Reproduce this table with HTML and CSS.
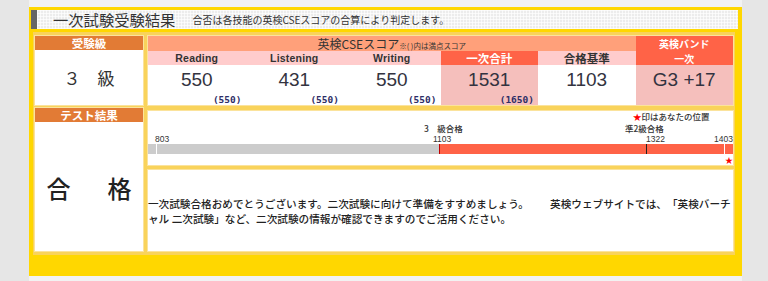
FILE: index.html
```html
<!DOCTYPE html>
<html lang="ja">
<head>
<meta charset="utf-8">
<title>一次試験受験結果</title>
<link rel="stylesheet" href="styles.css">
</head>
<body>
<div class="page">
  <div class="frame">
    <div class="head">
      <h1 class="head-title">一次試験受験結果</h1>
      <p class="head-note">合否は各技能の英検CSEスコアの合算により判定します。</p>
    </div>
    <div class="panel">
      <div class="row row-top">
        <div class="side">
          <div class="side-label">受験級</div>
          <div class="side-value grade">３　級</div>
        </div>
        <div class="scores">
          <div class="cse-head">英検CSEスコア<small>※( )内は満点スコア</small></div>
          <div class="band-head"><span>英検バンド</span><span>一次</span></div>
          <div class="sub sub-latin">Reading</div>
          <div class="sub sub-latin">Listening</div>
          <div class="sub sub-latin">Writing</div>
          <div class="sub sub-total">一次合計</div>
          <div class="sub">合格基準</div>
          <div class="val"><span class="num">550</span><span class="max">(550)</span></div>
          <div class="val"><span class="num">431</span><span class="max">(550)</span></div>
          <div class="val"><span class="num">550</span><span class="max">(550)</span></div>
          <div class="val val-pink"><span class="num">1531</span><span class="max">(1650)</span></div>
          <div class="val"><span class="num">1103</span></div>
          <div class="val val-pink"><span class="num">G3 +17</span></div>
        </div>
      </div>
      <div class="row row-bottom">
        <div class="side">
          <div class="side-label">テスト結果</div>
          <div class="side-value result"><span>合</span><span>格</span></div>
        </div>
        <div class="detail">
          <div class="chart">
            <div class="legend"><span class="star">★</span>印はあなたの位置</div>
            <div class="grade-label grade-3">3　級合格</div>
            <div class="grade-label grade-p2">準2級合格</div>
            <div class="tick-label tl-803">803</div>
            <div class="tick-label tl-1103">1103</div>
            <div class="tick-label tl-1322">1322</div>
            <div class="tick-label tl-1403">1403</div>
            <div class="bar">
              <div class="bar-base"></div>
              <div class="bar-pass"></div>
              <i class="tick tick-803"></i>
              <i class="tick tick-1103"></i>
              <i class="tick tick-1322"></i>
              <i class="tick tick-1403"></i>
            </div>
            <div class="you star">★</div>
          </div>
          <div class="message">
            <p>一次試験合格おめでとうございます。二次試験に向けて準備をすすめましょう。　　英検ウェブサイトでは、「英検バーチ<br>ャル 二次試験」など、二次試験の情報が確認できますのでご活用ください。</p>
          </div>
        </div>
      </div>
    </div>
  </div>
</div>
</body>
</html>
```

FILE: styles.css
```css
* { box-sizing: border-box; margin: 0; padding: 0; }
html, body { height: 100%; }
body {
  background: #e6e6e6;
  font-family: "Noto Sans CJK JP", "Liberation Sans", sans-serif;
  color: #333;
  text-spacing-trim: space-all;
}
.page {
  margin-left: 29px;
  width: 713px;
  min-height: 281px;
  background: #f2f2f2;
  padding-top: 7px;
}
.frame {
  background: #ffd700;
  padding: 3px 4px 21px 2px;
}
.head {
  height: 19px;
  display: flex;
  align-items: center;
  gap: 17px;
  border-left: 6px solid #666;
  background-color: #ececec;
  background-image:
    linear-gradient(90deg, rgba(255,255,255,.7) 1px, transparent 1px),
    linear-gradient(rgba(255,255,255,.7) 1px, transparent 1px);
  background-size: 3px 3px;
  padding-left: 16px;
}
.head-title {
  font-size: 15.3px;
  font-weight: 400;
  line-height: 19px;
  color: #333;
}
.head-note {
  font-size: 10px;
  line-height: 19px;
  color: #333;
}
.panel {
  margin: 3px 3px 0 2px;
  background: #f9d35b;
  padding: 4px 2px;
  display: flex;
  flex-direction: column;
  gap: 3px;
}
.row { display: flex; gap: 5px; }
.row-top { height: 69px; }
.row-bottom { height: 143px; }
.side {
  width: 108px;
  display: flex;
  flex-direction: column;
  box-shadow: 0 0 0 1px #fbe39c;
}
.side-label {
  height: 14px;
  background: #e27b35;
  color: #fff;
  font-size: 11.5px;
  font-weight: 700;
  line-height: 14px;
  text-align: center;
}
.side-value {
  flex: 1;
  background: #fff;
  display: flex;
  align-items: center;
  justify-content: center;
  color: #333;
}
.grade { font-size: 17px; padding-bottom: 1px; }
.result {
  font-size: 24px;
  font-weight: 500;
  gap: 37px;
  color: #222;
  padding-top: 2px;
}
.scores {
  flex: 1;
  display: grid;
  grid-template-columns: repeat(6, 1fr);
  grid-template-rows: 15px 14px 40px;
  box-shadow: 0 0 0 1px #fbe39c;
}
.cse-head {
  grid-column: 1 / 6;
  background: #ffa07a;
  font-size: 12px;
  line-height: 15px;
  text-align: center;
  color: #333;
}
.cse-head small { font-size: 7.5px; }
.band-head {
  grid-column: 6;
  grid-row: 1 / 3;
  background: #ff6347;
  color: #fff;
  font-size: 10px;
  font-weight: 700;
  display: flex;
  flex-direction: column;
  align-items: center;
  justify-content: center;
}
.band-head span {
  display: block;
  line-height: 15px;
}
.sub {
  background: #ffcccc;
  font-size: 11.5px;
  font-weight: 700;
  line-height: 14px;
  text-align: center;
  color: #333;
}
.sub-latin {
  font-family: "Liberation Sans", sans-serif;
  font-size: 10.5px;
  letter-spacing: 0.2px;
}
.sub-total { background: #ff6347; color: #fff; }
.val {
  background: #fff;
  display: flex;
  flex-direction: column;
  align-items: center;
  padding: 5px 4px 0;
}
.val-pink { background: #f5bfbc; }
.num {
  font-family: "Liberation Sans", sans-serif;
  font-size: 19px;
  line-height: 20px;
  color: #333340;
}
.max {
  align-self: flex-end;
  margin-top: 5px;
  font-family: "DejaVu Sans Mono", monospace;
  font-weight: 700;
  font-size: 9.5px;
  line-height: 10px;
  color: #2e2e66;
}
.detail {
  flex: 1;
  display: flex;
  flex-direction: column;
  gap: 5px;
  padding-top: 3px;
}
.chart {
  position: relative;
  height: 54px;
  background: #fff;
  box-shadow: 0 0 0 1px #fbe39c;
  font-size: 8.5px;
  color: #333;
}
.legend {
  position: absolute;
  left: 485px;
  top: 0;
  line-height: 10px;
  font-weight: 500;
}
.star { color: #ff0000; }
.grade-label {
  position: absolute;
  top: 12px;
  line-height: 10px;
  font-weight: 500;
}
.grade-3 { left: 276px; }
.grade-p2 { left: 477px; }
.tick-label {
  position: absolute;
  top: 23px;
  line-height: 10px;
  font-family: "Liberation Sans", sans-serif;
  font-size: 8.5px;
}
.tl-803 { left: 7px; }
.tl-1103 { left: 285px; }
.tl-1322 { left: 498px; }
.tl-1403 { right: 0; }
.bar {
  position: absolute;
  left: 0;
  right: 0;
  top: 33px;
  height: 10px;
  display: flex;
}
.bar-base { width: 291px; background: #cccccc; }
.bar-pass { flex: 1; background: #ff6347; }
.tick {
  position: absolute;
  top: 0;
  width: 1px;
  height: 10px;
}
.tick-803 { left: 8px; background: #fff; }
.tick-1103 { left: 291px; background: #c00000; }
.tick-1322 { left: 498px; background: #222; }
.tick-1403 { left: 576px; background: #fff; }
.you {
  position: absolute;
  right: 0;
  top: 45px;
  font-size: 8px;
  line-height: 8px;
}
.message {
  flex: 1;
  background: #fff;
  display: flex;
  align-items: center;
  box-shadow: 0 0 0 1px #fbe39c;
}
.message p {
  font-size: 10.64px;
  font-weight: 500;
  line-height: 15px;
  color: #222;
  white-space: nowrap;
}
```
